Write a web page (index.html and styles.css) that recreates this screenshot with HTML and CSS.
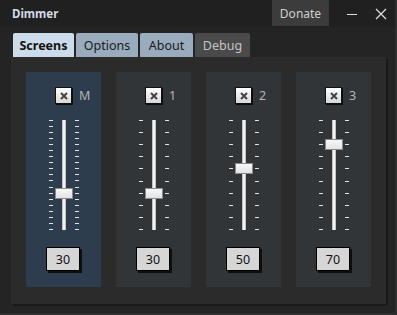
FILE: index.html
```html
<!DOCTYPE html>
<html lang="en">
<head>
    <meta charset="UTF-8">
    <title>Dimmer</title>
    <link rel="stylesheet" href="styles.css">
</head>
<body>
    <div class="window">
        <div class="titlebar">
            <span class="title">Dimmer</span>
            <button class="donate">Donate</button>
            <span class="win-btn minimize">
                <svg width="12" height="12" viewBox="0 0 12 12"><line x1="1" y1="6.5" x2="11" y2="6.5" stroke="#e0e0e0" stroke-width="1"/></svg>
            </span>
            <span class="win-btn">
                <svg width="12" height="12" viewBox="0 0 12 12"><path d="M1 1 L11 11 M11 1 L1 11" stroke="#e0e0e0" stroke-width="1.2"/></svg>
            </span>
        </div>

        <div class="tabs">
            <div class="tab active">Screens</div>
            <div class="tab">Options</div>
            <div class="tab">About</div>
            <div class="tab disabled">Debug</div>
        </div>

        <div class="panel">
            <div class="screen selected">
                <div class="check-row">
                    <span class="check"><svg width="8" height="8" viewBox="0 0 8 8"><path d="M1 1 L7 7 M7 1 L1 7" stroke="#444" stroke-width="2"/></svg></span>
                    <span class="label">M</span>
                </div>
                <div class="slider">
                    <div class="ticks dense"><i></i><i></i><i></i><i></i><i></i><i></i><i></i><i></i><i></i><i></i><i></i><i></i><i></i><i></i><i></i><i></i><i></i><i></i><i></i></div>
                    <div class="track"></div>
                    <div class="ticks dense"><i></i><i></i><i></i><i></i><i></i><i></i><i></i><i></i><i></i><i></i><i></i><i></i><i></i><i></i><i></i><i></i><i></i><i></i><i></i></div>
                    <div class="thumb" style="top: 68px"></div>
                </div>
                <div class="value">30</div>
            </div>

            <div class="screen">
                <div class="check-row">
                    <span class="check"><svg width="8" height="8" viewBox="0 0 8 8"><path d="M1 1 L7 7 M7 1 L1 7" stroke="#444" stroke-width="2"/></svg></span>
                    <span class="label">1</span>
                </div>
                <div class="slider">
                    <div class="ticks"><i></i><i></i><i></i><i></i><i></i><i></i><i></i><i></i><i></i><i></i></div>
                    <div class="track"></div>
                    <div class="ticks"><i></i><i></i><i></i><i></i><i></i><i></i><i></i><i></i><i></i><i></i></div>
                    <div class="thumb" style="top: 68px"></div>
                </div>
                <div class="value">30</div>
            </div>

            <div class="screen">
                <div class="check-row">
                    <span class="check"><svg width="8" height="8" viewBox="0 0 8 8"><path d="M1 1 L7 7 M7 1 L1 7" stroke="#444" stroke-width="2"/></svg></span>
                    <span class="label">2</span>
                </div>
                <div class="slider">
                    <div class="ticks"><i></i><i></i><i></i><i></i><i></i><i></i><i></i><i></i><i></i><i></i></div>
                    <div class="track"></div>
                    <div class="ticks"><i></i><i></i><i></i><i></i><i></i><i></i><i></i><i></i><i></i><i></i></div>
                    <div class="thumb" style="top: 43px"></div>
                </div>
                <div class="value">50</div>
            </div>

            <div class="screen">
                <div class="check-row">
                    <span class="check"><svg width="8" height="8" viewBox="0 0 8 8"><path d="M1 1 L7 7 M7 1 L1 7" stroke="#444" stroke-width="2"/></svg></span>
                    <span class="label">3</span>
                </div>
                <div class="slider">
                    <div class="ticks"><i></i><i></i><i></i><i></i><i></i><i></i><i></i><i></i><i></i><i></i></div>
                    <div class="track"></div>
                    <div class="ticks"><i></i><i></i><i></i><i></i><i></i><i></i><i></i><i></i><i></i><i></i></div>
                    <div class="thumb" style="top: 19px"></div>
                </div>
                <div class="value">70</div>
            </div>
        </div>
    </div>
</body>
</html>
```

FILE: styles.css
```css
body {
    margin: 0;
    background: #232323;
    font-family: "Noto Sans", "Open Sans", sans-serif;
}

.window {
    width: 395px;
    height: 313px;
    background: #242424;
    border-right: 2px solid #2e2e2e;
    border-bottom: 2px solid #2e2e2e;
    overflow: hidden;
}

.titlebar {
    display: flex;
    align-items: flex-start;
    height: 27px;
    background: #202020;
}

.title {
    margin: 6px 0 0 12px;
    font-size: 11.5px;
    font-weight: bold;
    color: #d6d9e6;
}

.donate {
    margin-left: auto;
    width: 57px;
    height: 26px;
    padding: 0;
    border: none;
    background: #3c3c3c;
    color: #d0d0d0;
    font-family: inherit;
    font-size: 12px;
}

.win-btn {
    width: 29px;
    height: 27px;
    display: flex;
    align-items: center;
    justify-content: center;
}

.win-btn.minimize {
    margin-left: 8px;
}

.tabs {
    display: flex;
    gap: 2px;
    margin: 6px 0 0 13px;
    height: 24px;
}

.tab {
    display: flex;
    align-items: center;
    justify-content: center;
    background: #9aabbd;
    color: #1a1a1a;
    font-size: 12.5px;
    border-radius: 2px 2px 0 0;
}

.tab:nth-child(1) { width: 61px; }
.tab:nth-child(2) { width: 62px; }
.tab:nth-child(3) { width: 53px; }
.tab:nth-child(4) { width: 55px; }

.tab.active {
    background: #cddcea;
    font-weight: bold;
    color: #111;
}

.tab.disabled {
    background: #4a4a4a;
    color: #c4c4c4;
}

.panel {
    display: flex;
    gap: 15px;
    margin-left: 11px;
    width: 345px;
    height: 215px;
    padding: 15px 15px 17px 15px;
    background: #2b2b2b;
    box-shadow: 2px 2px 0 #191919;
}

.screen {
    width: 75px;
    height: 215px;
    background: #323538;
    display: flex;
    flex-direction: column;
}

.screen.selected {
    background: #2e3d4d;
}

.check-row {
    display: flex;
    align-items: center;
    margin: 15px 0 0 29px;
    height: 17px;
}

.check {
    width: 15px;
    height: 15px;
    border: 1px solid #111;
    background: linear-gradient(#ffffff, #d8d8d8);
    box-shadow: 1px 1px 0 #0c0c0c;
    display: flex;
    align-items: center;
    justify-content: center;
}

.label {
    margin-left: 7px;
    font-size: 12.5px;
    color: #b4b4b4;
}

.slider {
    position: relative;
    display: flex;
    justify-content: space-between;
    width: 30px;
    height: 110px;
    margin: 16px 0 0 23px;
}

.ticks {
    display: flex;
    flex-direction: column;
    justify-content: space-between;
    width: 4px;
    height: 110px;
}

.ticks i {
    display: block;
    height: 1px;
    background: #e4e4e4;
}

.track {
    width: 4px;
    height: 110px;
    background: linear-gradient(90deg, #a8a8a8, #f2f2f2 35%, #f2f2f2 65%, #a8a8a8);
}

.thumb {
    position: absolute;
    left: 6px;
    width: 16px;
    height: 9px;
    border: 1px solid #8a8a8a;
    background: linear-gradient(#f8f8f8, #e2e2e2);
}

.value {
    margin: 17px 0 0 20px;
    width: 32px;
    height: 22px;
    border: 1px solid #000;
    background: #d6d6d6;
    box-shadow: 2px 2px 0 #0e0e0e;
    display: flex;
    align-items: center;
    justify-content: center;
    font-size: 12.5px;
    color: #111;
}
```
